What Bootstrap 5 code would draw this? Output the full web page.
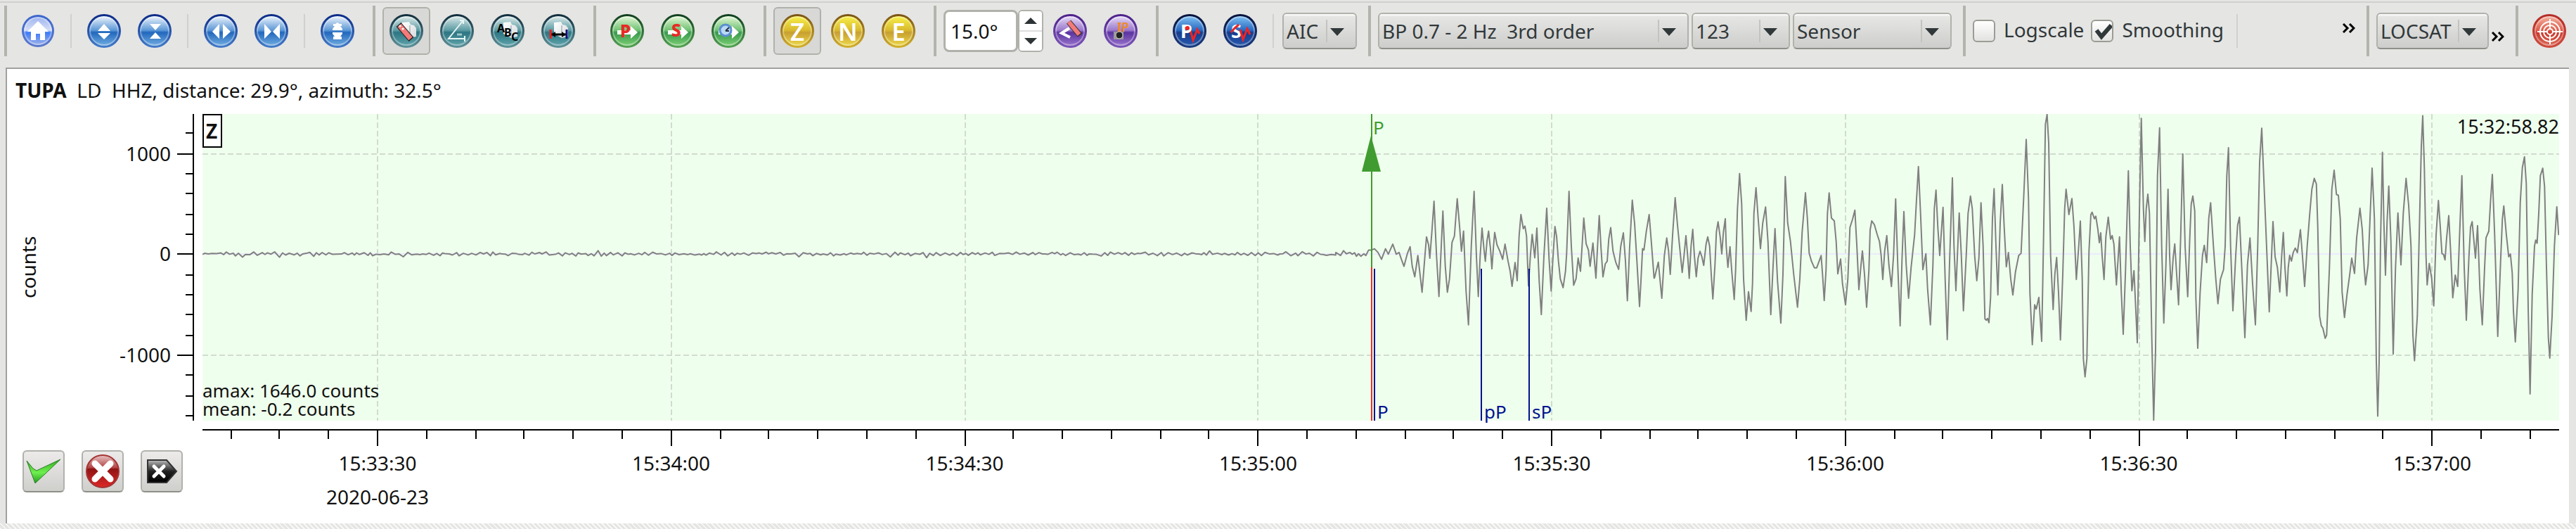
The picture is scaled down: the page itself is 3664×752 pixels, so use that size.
<!DOCTYPE html>
<html lang="en">
<head>
<meta charset="utf-8">
<meta name="viewport" content="width=device-width, initial-scale=1">
<title>Picker - TUPA</title>
<link href="https://cdn.jsdelivr.net/npm/bootstrap@5.3.0/dist/css/bootstrap.min.css" rel="stylesheet">
<script src="https://cdn.jsdelivr.net/npm/bootstrap@5.3.0/dist/js/bootstrap.bundle.min.js"></script>
<style>
:root{--face:#e5e5e3;--handle:#b4b4ae;--edge:#b1b1ac;--ink:#31383a}
body{background:var(--face);font-family:"Noto Sans","Open Sans",sans-serif;font-size:28px;line-height:40px;color:#111}
.toolbar{margin-top:2px;border-top:2px solid #d0d0ce;padding:4px 4px 16px 6px}
.tool-group{gap:4px;height:72px;border-left:4px solid var(--handle);padding:0 16px 0 10px}
.tool-group.last-group{padding-right:0}
.thin-rule{width:2px;height:48px;background:#d0d0ce;margin:0 8px}
.tool-btn{width:68px;height:68px;padding:0;border:2px solid transparent;border-radius:6px;background:none;display:flex;align-items:center;justify-content:center}
.tool-btn.pressed{background:#d8d8d6;border-color:var(--edge)}
.orb{width:48px;height:48px;border-radius:50%;border:3px solid transparent;display:block;overflow:hidden;
 background:linear-gradient(var(--a),var(--b) 48%,var(--c) 55%,var(--d)) padding-box,linear-gradient(var(--r1),var(--r2)) border-box;
 box-shadow:inset 0 0 0 2px rgba(255,255,255,.35)}
.orb svg{display:block;width:48px;height:48px;margin:-3px}
.orb-home{--a:#9db4ee;--b:#d5dff8;--c:#3b7af8;--d:#9fb2e8;--r1:#3d66cc;--r2:#5b79cc;width:46px;height:46px}
.orb-blue{--a:#edf4fc;--b:#5b97d6;--c:#2267bd;--d:#71ace0;--r1:#0b2a86;--r2:#447bca}
.orb-teal{--a:#dceaea;--b:#5a9aa2;--c:#2c7582;--d:#5fa3aa;--r1:#0f2b3b;--r2:#5e939b}
.orb-green{--a:#e3f7d6;--b:#6fc173;--c:#389a4d;--d:#7bcd72;--r1:#0f3d1d;--r2:#55a355}
.orb-gold{--a:#f7f04a;--b:#d9b92e;--c:#c79f31;--d:#ecd748;--r1:#7a5213;--r2:#d3b02b}
.orb-violet{--a:#e6d9f6;--b:#9a78cb;--c:#5b33a0;--d:#9873cc;--r1:#4b2089;--r2:#7c55b8}
.orb-navy{--a:#7fc0f2;--b:#2868c0;--c:#173c8c;--d:#2859ae;--r1:#08123c;--r2:#1c3d82}
.orb-red{--a:#f4b3a2;--b:#dd5a49;--c:#c8392e;--d:#dd6a58;--r1:#b32c26;--r2:#cf4a3e}
.combo,.push-btn{border:2px solid var(--edge);border-bottom-color:#8f8f89;border-radius:6px;color:var(--ink)}
.combo{height:52px;padding:0 44px 0 4px;font-size:28px;line-height:44px;appearance:none;
 background:url("data:image/svg+xml,%3Csvg xmlns='http://www.w3.org/2000/svg' width='44' height='48'%3E%3Cpath d='M2 8h2v32h-2z' fill='%23c3c3c0'/%3E%3Cpath d='M8 20h20l-10 11z' fill='%2331383a'/%3E%3C/svg%3E") right center no-repeat,linear-gradient(#f8f8f7 0 2px,#e6e6e4 3px,#cdcdcb)}
.w-aic{width:106px}.w-filter{width:442px}.w-count{width:140px}.w-unit{width:226px}.w-loc{width:160px}
.spin-text{width:106px;height:60px;border:3px solid var(--edge);border-radius:8px;padding:0 7px;background:#fff;color:#111;line-height:50px}
.spin-arrows{width:36px;height:60px;border:2px solid var(--edge);border-radius:6px;background:#fff;overflow:hidden}
.spin-arrows button{border:0;background:#fff;padding:0;flex:1;display:flex;align-items:center;justify-content:center}
.spin-arrows button+button{border-top:2px solid #ddd}
.tick-box{appearance:none;width:32px;height:32px;border:2px solid #9c9c96;border-radius:6px;background:linear-gradient(#fff,#e2e2e0);margin:0}
.tick-box:checked{background:url("data:image/svg+xml,%3Csvg xmlns='http://www.w3.org/2000/svg' viewBox='0 0 28 28'%3E%3Cpath d='M6 13l7 9L27 6' fill='none' stroke='%2331383a' stroke-width='6'/%3E%3C/svg%3E") center/28px no-repeat,linear-gradient(#fff,#e2e2e0)}
.tick-label{color:var(--ink);margin:0 6px 4px 8px}
.more{border:0;background:none;padding:0;line-height:0}
.panel{margin:0 10px 0 8px;border:solid #a0a09e;border-width:2px 0 0 2px;background:#fff}
.trace-title{padding:10px 12px 14px;white-space:pre}
.gutter{width:278px;flex:none}
.plot-row{margin-right:14px;min-height:200px}
.y-name{writing-mode:vertical-rl;transform:rotate(180deg);margin-left:10px}
.y-labels{flex:1}
.y-labels span{position:absolute;right:9px;transform:translateY(-50%);margin-top:-1px}
.y-scale{width:24px;margin-right:12px}
.plot{background:#efffed}
.small-note{font-size:26px;line-height:26px}
.comp-box{width:28px;height:48px;border:2px solid #000;background:#fff;font-weight:700;line-height:44px;padding-left:3px;font-size:28px}
.start-time{font-size:27px;line-height:36px}
.phase{position:absolute;font-size:26px;line-height:26px;margin-left:4px}
.phase.picked{top:6px;color:#409c30;margin-left:2px}
.phase.theo{bottom:0;color:#00128f}
.x-labels{height:96px;line-height:48px}
.x-labels div{position:absolute;transform:translateX(-50%);text-align:center;white-space:nowrap}
.actions{padding:42px 0 0 22px;gap:24px}
.panel-foot{height:14px}
.push-btn{width:60px;height:60px;padding:0;background:linear-gradient(#ecebea,#cfcfcc);display:flex;align-items:center;justify-content:center}
.hatch{height:8px;background:repeating-linear-gradient(45deg,#f8f8f7 0 2px,var(--face) 2px 5px)}
svg text{font-family:"Noto Sans",sans-serif}
</style>
</head>
<body class="min-vh-100 d-flex flex-column overflow-x-hidden">
<svg width="0" height="0" class="position-absolute" aria-hidden="true">
<defs>
<linearGradient id="gPage" x1="0" y1="0" x2="1" y2="1"><stop offset="0" stop-color="#fff"/><stop offset="1" stop-color="#d5dadc"/></linearGradient>
<linearGradient id="gTag" x1="0" y1="0" x2="0" y2="1"><stop offset="0" stop-color="#bbb"/><stop offset=".5" stop-color="#222"/><stop offset="1" stop-color="#000"/></linearGradient>
<linearGradient id="gStop" x1="0" y1="0" x2="0" y2="1"><stop offset="0" stop-color="#e9c4c4"/><stop offset=".4" stop-color="#b04040"/><stop offset=".42" stop-color="#8e1414"/><stop offset="1" stop-color="#e02626"/></linearGradient>
<linearGradient id="gOk" x1="0" y1="0" x2="0" y2="1"><stop offset="0" stop-color="#2fae1c"/><stop offset=".55" stop-color="#6ff050"/><stop offset="1" stop-color="#1f9a1c"/></linearGradient>
<symbol id="pages" viewBox="0 0 48 48"><path d="M18 12l10-1 2 4 5 1 3 4v12l-9 2-11-6z" fill="url(#gPage)"/><path d="M29 16v13" stroke="#8d999d" stroke-width="1"/></symbol>
</defs>
</svg>

<header class="toolbar d-flex align-items-center">
 <div class="tool-group d-flex align-items-center">
  <button class="tool-btn" aria-label="Home"><span class="orb orb-home"><svg viewBox="0 0 48 48"><path d="M23 9L8 24h5v12h7v-9h6v9h7V24h5z" fill="#fff"/></svg></span></button>
  <span class="thin-rule"></span>
  <button class="tool-btn" aria-label="Increase amplitude"><span class="orb orb-blue"><svg viewBox="0 0 48 48"><path d="M24 14l9 10H15zM15 27h18l-9 9z" fill="#fff"/></svg></span></button>
  <button class="tool-btn" aria-label="Decrease amplitude"><span class="orb orb-blue"><svg viewBox="0 0 48 48"><path d="M17 14h16l-8 9zM25 26l8 9H17z" fill="#fff"/></svg></span></button>
  <span class="thin-rule"></span>
  <button class="tool-btn" aria-label="Stretch time"><span class="orb orb-blue"><svg viewBox="0 0 48 48"><path d="M22 14v21L12 25zM27 14v21l11-10z" fill="#fff"/></svg></span></button>
  <button class="tool-btn" aria-label="Compress time"><span class="orb orb-blue"><svg viewBox="0 0 48 48"><path d="M14 14v21l10-10zM36 14v21L26 25z" fill="#fff"/></svg></span></button>
  <span class="thin-rule"></span>
  <button class="tool-btn" aria-label="Fit amplitude"><span class="orb orb-blue"><svg viewBox="0 0 48 48"><path d="M18 14h3l3-2 3 2h3v3h-2l3 4v2H17v-2l3-4h-2zM17 26h14v2l-3 4h2v4H18v-4h2l-3-4z" fill="#fff"/></svg></span></button>
 </div>
 <div class="tool-group d-flex align-items-center">
  <button class="tool-btn pressed" aria-label="Picking off"><span class="orb orb-teal"><svg viewBox="0 0 48 48"><use href="#pages"/><path d="M13 15l18 21" stroke="#222" stroke-width="9"/><path d="M14 16l16 19" stroke="#f27a78" stroke-width="7"/><path d="M15 17h.1M19 21h.1" stroke="#fff" stroke-width="3" stroke-linecap="round"/></svg></span></button>
  <button class="tool-btn" aria-label="Angle"><span class="orb orb-teal"><svg viewBox="0 0 48 48"><path d="M32 10L12 35h23M28 9h5v5M35 31v8" fill="none" stroke="#e6f4f4" stroke-width="2"/><path d="M24 29h7" stroke="#9fc6ca" stroke-width="3"/></svg></span></button>
  <button class="tool-btn" aria-label="Rename phases"><span class="orb orb-teal"><svg viewBox="0 0 48 48"><use href="#pages"/><g font-weight="700" font-size="16"><text x="9" y="26">A</text><text x="19" y="32">B</text><text x="29" y="38">C</text></g></svg></span></button>
  <button class="tool-btn" aria-label="Uncertainty"><span class="orb orb-teal"><svg viewBox="0 0 48 48"><use href="#pages"/><path d="M12 29h25" stroke="#000" stroke-width="3"/><path d="M20 25l-6 4 6 4zM29 25l6 4-6 4z"/><path d="M13 22v13" stroke="#f02020" stroke-width="3"/><path d="M36 22v13" stroke="#10107a" stroke-width="3"/></svg></span></button>
 </div>
 <div class="tool-group d-flex align-items-center">
  <button class="tool-btn" aria-label="Pick P"><span class="orb orb-green"><svg viewBox="0 0 48 48"><path d="M10 23h19v-6l10 9-10 9v-6H10z" fill="#fff"/><text x="14" y="33" font-size="24" font-weight="800" fill="#e82a24">P</text></svg></span></button>
  <button class="tool-btn" aria-label="Pick S"><span class="orb orb-green"><svg viewBox="0 0 48 48"><path d="M10 23h19v-6l10 9-10 9v-6H10z" fill="#fff"/><text x="15" y="32" font-size="24" font-weight="800" fill="#e82a24">S</text></svg></span></button>
  <button class="tool-btn" aria-label="Pick at time"><span class="orb orb-green"><svg viewBox="0 0 48 48"><path d="M10 23h19v-6l10 9-10 9v-6H10z" fill="#fff"/><circle cx="20" cy="23" r="8" fill="#b9d8f4" stroke="#5b8fd0" stroke-width="3"/><path d="M20 24l5-5M20 24h5" stroke="#234" stroke-width="2"/></svg></span></button>
 </div>
 <div class="tool-group d-flex align-items-center">
  <button class="tool-btn pressed" aria-label="Component Z"><span class="orb orb-gold"><svg viewBox="0 0 48 48"><text x="24" y="38" text-anchor="middle" font-size="35" font-weight="600" fill="#fff">Z</text></svg></span></button>
  <button class="tool-btn" aria-label="Component N"><span class="orb orb-gold"><svg viewBox="0 0 48 48"><text x="24" y="38" text-anchor="middle" font-size="35" font-weight="600" fill="#fff">N</text></svg></span></button>
  <button class="tool-btn" aria-label="Component E"><span class="orb orb-gold"><svg viewBox="0 0 48 48"><text x="24" y="38" text-anchor="middle" font-size="35" font-weight="600" fill="#fff">E</text></svg></span></button>
 </div>
 <div class="tool-group d-flex align-items-center">
  <div class="d-flex">
   <input class="spin-text" type="text" value="15.0°" aria-label="Maximum distance">
   <div class="spin-arrows d-flex flex-column">
    <button aria-label="Up"><svg width="18" height="9"><path d="M0 9h18L9 0z" fill="#2e3436"/></svg></button>
    <button aria-label="Down"><svg width="18" height="9"><path d="M0 0h18L9 9z" fill="#2e3436"/></svg></button>
   </div>
  </div>
  <button class="tool-btn" aria-label="Sort by distance"><span class="orb orb-violet"><svg viewBox="0 0 48 48"><path d="M23 20l-11 7 12 6" fill="none" stroke="#fff" stroke-width="4"/><path d="M22 11l16 19" stroke="#333" stroke-width="8"/><path d="M22 11l15 18" stroke="#f27a78" stroke-width="6"/></svg></span></button>
  <button class="tool-btn" aria-label="Show all"><span class="orb orb-violet"><svg viewBox="0 0 48 48"><text x="19" y="25" font-size="17" font-weight="600" fill="#f08a28">IP</text><path d="M22 13v14" stroke="#f08a28" stroke-width="3"/><path d="M14 25h14v11H14z" fill="#999"/><circle cx="22" cy="30" r="5" fill="#222" stroke="#ccc"/></svg></span></button>
 </div>
 <div class="tool-group d-flex align-items-center">
  <button class="tool-btn" aria-label="Align on P"><span class="orb orb-navy"><svg viewBox="0 0 48 48"><path d="M16 19h8l5 18 6-15 3 6" fill="none" stroke="#ee2424" stroke-width="3"/><text x="11" y="34" font-size="27" font-weight="700" fill="#fff">P</text><circle cx="21" cy="20" r="3" fill="#ee2424"/></svg></span></button>
  <button class="tool-btn" aria-label="Align on S"><span class="orb orb-navy"><svg viewBox="0 0 48 48"><text x="11" y="34" font-size="27" font-weight="700" fill="#fff">S</text><path d="M11 26l5-6 6-5M24 22l4 14 6-15 4 8" fill="none" stroke="#ee2424" stroke-width="3"/></svg></span></button>
  <span class="thin-rule"></span>
  <select class="combo w-aic" aria-label="Repicker"><option>AIC</option></select>
 </div>
 <div class="tool-group d-flex align-items-center">
  <select class="combo w-filter" aria-label="Filter"><option>BP 0.7 - 2 Hz &nbsp;3rd order</option></select>
  <select class="combo w-count" aria-label="Rotation"><option>123</option></select>
  <select class="combo w-unit" aria-label="Unit"><option>Sensor</option></select>
 </div>
 <div class="tool-group d-flex align-items-center flex-grow-1">
  <input class="tick-box" type="checkbox" id="logscale"><label class="tick-label" for="logscale">Logscale</label>
  <input class="tick-box" type="checkbox" id="smoothing" checked><label class="tick-label" for="smoothing">Smoothing</label>
  <span class="thin-rule"></span>
  <button class="more ms-auto mb-2" aria-label="More tools"><svg width="18" height="14" fill="none" stroke="#000" stroke-width="3"><path d="M1 1l6 6-6 6M10 1l6 6-6 6"/></svg></button>
 </div>
 <div class="tool-group d-flex align-items-center">
  <select class="combo w-loc" aria-label="Locator"><option>LOCSAT</option></select>
  <button class="more mt-3" aria-label="More locator tools"><svg width="18" height="14" fill="none" stroke="#000" stroke-width="3"><path d="M1 1l6 6-6 6M10 1l6 6-6 6"/></svg></button>
 </div>
 <div class="tool-group last-group d-flex align-items-center">
  <button class="tool-btn" aria-label="Relocate"><span class="orb orb-red"><svg viewBox="0 0 48 48" fill="none" stroke="#fff" stroke-width="2"><circle cx="25" cy="25" r="14"/><circle cx="25" cy="25" r="9"/><circle cx="25" cy="25" r="4"/><path d="M25 7v14M25 29v14M7 25h14M29 25h14"/></svg></span></button>
 </div>
</header>

<main class="panel flex-grow-1 d-flex flex-column">
 <div class="trace-title"><b>TUPA</b>  LD  HHZ, distance: 29.9°, azimuth: 32.5°</div>
 <div class="plot-row flex-grow-1 d-flex">
  <div class="gutter d-flex">
   <div class="y-name text-center">counts</div>
   <div class="y-labels position-relative" id="yLabels"></div>
   <svg class="y-scale h-100" id="yScale" viewBox="0 0 24 436" preserveAspectRatio="none" shape-rendering="crispEdges"></svg>
  </div>
  <div class="plot position-relative flex-grow-1">
   <svg class="position-absolute w-100 h-100" viewBox="0 0 3352 436" preserveAspectRatio="none">
    <g id="grid" stroke="#cfdccf" stroke-width="2" stroke-dasharray="8 4" shape-rendering="crispEdges"></g>
    <path d="M0 199H3352" stroke="#eaeaff" stroke-width="2"/>
    <path id="trace" fill="none" stroke="#808080" stroke-width="2" stroke-linejoin="round"/>
    <g id="phaseLines" stroke-width="2" shape-rendering="crispEdges"></g>
    <path d="M1662 31l14 51h-27z" fill="#409c30"/>
   </svg>
   <div class="comp-box position-absolute top-0 start-0">Z</div>
   <div class="start-time position-absolute top-0 end-0">15:32:58.82</div>
   <div class="small-note position-absolute start-0 bottom-0 pb-1">amax: 1646.0 counts<br>mean: -0.2 counts</div>
   <div id="phases"></div>
  </div>
 </div>
 <div class="d-flex">
  <div class="gutter d-flex actions">
   <button class="push-btn" aria-label="Confirm pick"><svg width="52" height="40" viewBox="0 0 52 40"><path d="M2 5l9 11 5 3L50 3 14 37z" fill="url(#gOk)" stroke="#2f7d28"/></svg></button>
   <button class="push-btn" aria-label="Disable trace"><svg width="50" height="50" viewBox="0 0 50 50"><circle cx="25" cy="25" r="23" fill="url(#gStop)" stroke="#a43434" stroke-width="2"/><path d="M14 14l22 22M36 14L14 36" stroke="#fff" stroke-width="9" stroke-linecap="round"/></svg></button>
   <button class="push-btn" aria-label="Discard pick"><svg width="46" height="36" viewBox="0 0 46 36"><path d="M3 2h27l14 16-14 16H3z" fill="url(#gTag)" stroke="#333" stroke-width="2"/><path d="M12 11l14 14M26 11L12 25" stroke="#fff" stroke-width="5" stroke-linecap="round"/></svg></button>
  </div>
  <div class="plot-row flex-grow-1">
   <svg class="d-block w-100" height="36" id="xScale" viewBox="0 0 3352 36" preserveAspectRatio="none" shape-rendering="crispEdges"></svg>
   <div class="x-labels position-relative" id="xLabels"></div>
  </div>
 </div>
 <div class="panel-foot"></div>
</main>
<div class="hatch"></div>
<style>.plot-row .x-labels{margin:0}.panel>.d-flex>.plot-row{min-height:0}</style>

<script>
const W = 3352, H = 436, ZERO = 199;
const el = id => document.getElementById(id);
const line = (x1, y1, x2, y2, extra = '') => `<path d="M${x1} ${y1}L${x2} ${y2}" ${extra}/>`;

// Amplitude scale: one tick per 200 counts, labels every 1000.
const yTicks = [27,57,85,113,143,171,199,229,257,285,315,343,371,401,429];
const yMajor = {57:'1000', 199:'0', 343:'-1000'};
el('yScale').innerHTML = `<g stroke="#000" stroke-width="2">${line(23,0,23,H)}${yTicks.map(y => line(yMajor[y] ? 0 : 12, y, 24, y)).join('')}</g>`;
el('yLabels').innerHTML = Object.entries(yMajor).map(([y,t]) => `<span style="top:${y/H*100}%">${t}</span>`).join('');

// Time scale: five seconds per tick, labels every thirty.
const first = 249, step = 417.5, even = v => Math.round((v - 1) / 2) * 2 + 1;
const names = ['15:33:30','15:34:00','15:34:30','15:35:00','15:35:30','15:36:00','15:36:30','15:37:00'];
let ticks = line(0, 13, W, 13);
for (let i = -3; i <= 44; i++) ticks += line(even(first + i*step/6), 12, even(first + i*step/6), i % 6 ? 26 : 36);
el('xScale').innerHTML = `<g stroke="#000" stroke-width="2">${ticks}</g>`;
el('xLabels').innerHTML = names.map((t,i) => `<div style="left:${(first + i*step)/W*100}%">${t}${i ? '' : '<br>2020-06-23'}</div>`).join('');
el('grid').innerHTML = line(0,57,W,57) + line(0,343,W,343) + names.map((t,i) => line(even(first+i*step),0,even(first+i*step),H)).join('');

// Phase markers.
const phases = [{x:1663,t:'P',picked:true},{x:1667,t:'P'},{x:1819,t:'pP'},{x:1887,t:'sP'}];
el('phaseLines').innerHTML = line(1663,0,1663,218,'stroke="#409c30"') + line(1663,218,1663,H,'stroke="#f22c2c"') + phases.slice(1).map(p => line(p.x,220,p.x,H,'stroke="#00128f"')).join('');
el('phases').innerHTML = phases.map(p => `<span class="phase ${p.picked ? 'picked' : 'theo'}" style="left:${p.x/W*100}%">${p.t}</span>`).join('');

// Waveform: background noise, then recorded blocks, each with its own origin and resolution.
let seed = 11;
const rnd = () => (seed = (seed * 16807) % 2147483647) / 2147483647;
const pts = [];
for (let x = 0, s = 1; x < 1612; x += 3 + rnd()*4, s = -s) {
  const big = rnd() > .94 ? 2.4 : 1;
  pts.push([x, ZERO + s * rnd() * 2.4 * big + (rnd() - .5) * 2]);
}
const blocks = [
[1612,2.8,`0 585,20 597,33 578,45 590,60 585,70 592,80 586,88 600,97 590,107 600,120 590,128 597,140 575,153 575,165 570,180 585,195 612,212 570,224 592,243 552,258 592,270 585,280 612,291 640,305 590,317 562,326 640,337 682,350 597,368 743,380 600,387 523,396 555,401 608,410 500,419 381,430 600,440 760,450 560,457 420,467 640,476 743,485 690,496 545,506 520,518 371,528 480,536 580,545 500,556 740,566 873,578 560,590 342,600 600,608 760,616 600,624 488,632 570,638 620,645 540,652 500,660 570,666 650,673 560,678 505,688 555,700 580,712 612,722 552,735 620,744 660,752 720,765 625,774 697,782 520,790 434,800 490,807 480,814 520,822 718,830 600,838 513,849 606,858 488,868 700,877 832,888 600,900 409,910 610,919 738,927 600,935 482,942 520,950 620,958 690,970 725,980 660,985 590,995 342,1005 560,1015 715,1025 690,1034 607,1044 660,1051 560,1058 448,1068 550,1078 575,1085 640,1097 547,1110 687,1117 560,1124 438,1132 570,1140 682,1150 630,1158 620,1165 530,1173 486,1183 580,1195 625,1207 652,1216 560,1227 507,1236 620,1244 777,1254 560,1265 377,1275 470,1285 620,1296 800,1302 700,1309 570,1315 575,1325 500,1337 434,1346 540,1358 687`],
[2052,3,`40 735,56 668,71 822,82 640,92 565,100 620,107 720,118 540,128 393,138 510,148 610,158 712,166 640,174 555,182 650,188 737,196 600,203 528,210 640,218 730,226 650,234 622,242 645,250 682,260 590,267 560,275 600,282 720,289 825,298 680,304 540,311 496,320 560,327 633,334 540,342 483,346 600,353 690,362 602,370 710,380 827,386 700,394 440,403 290,412 420,420 740,431 916,441 794,452 878,458 760,464 460,473 350,482 480,492 610,502 500,514 433,524 580,536 892,545 700,554 525,565 750,579 928,588 720,598 303,608 500,620 580,634 720,650 860,660 740,670 540,684 372,692 480,700 630,710 665,722 692,732 692,740 670,751 640,757 720,764 832,772 700,778 460,785 373,795 480,807 492,815 580,822 718,834 655,842 760,855 850,865 740,874 520,885 485,895 446,904 610,912 785,920 690,927 620,936 720,945 860,955 700,960 530,967 492,978 508,990 550,1000 580,1007 640,1014 742,1022 620,1031 555,1040 680,1051 772,1060 640,1069 398,1078 680,1088 940,1096 660,1104 452,1114 680,1124 822,1135 690,1150 550,1158 400,1166 260,1175 460,1185 700,1198 632,1205 780,1217 935,1228 680,1234 440,1241 361,1249 520,1257 640,1271 434,1280 740,1289 998,1300 640,1311 308,1318 600,1326 790`],
[2492,3,`20 458,29 640,38 875,50 640,58 460,68 386,76 440,86 640,95 747,104 650,113 415,122 600,130 910,136 916,141 908,147 926,154 820,162 480,169 355,177 600,185 808,195 500,204 337,212 520,221 688,230 627,240 740,249 808,260 710,274 640,284 630,295 400,306 145,316 400,322 800,332 1020,342 850,349 868,360 818,372 1006,380 560,388 80,395 38,402 160,410 640,421 870,428 720,436 648,444 800,452 1000,462 720,470 440,476 357,488 465,501 397,510 520,520 742,530 600,537 493,545 740,550 1080,557 1157,565 1080,574 620,582 465,587 455,597 483,603 472,612 530,618 585,624 543,630 640,638 742,646 560,656 476,666 570,673 555,680 590,691 765,704 560,712 800,720 976,730 700,742 278,750 600,757 790,766 704,773 860,780 1012,788 500,797 55,806 440,812 580,818 440,825 378,832 460,842 1000,850 1342,858 1040,866 300,875 95,884 600,893 928,902 680,911 357,918 640,924 785,933 650,940 590,948 720,956 850,965 560,974 206,984 600,995 815,1004 560,1010 420,1017 386,1025 450,1030 820,1038 1035,1048 800,1058 640,1066 596,1076 670,1085 480,1093 415,1105 600,1115 740,1124 845,1135 740,1148 700,1155 600,1162 300,1169 180,1178 600,1188 875,1200 640,1208 510,1216 476,1226 700,1239 990,1250 680,1261 565,1272 760,1284 935,1294 600,1302 240,1311 97,1325 440,1343 880`],
[2932,2.605,`39 430,48 560,58 600,68 690,76 560,83 470,90 600,98 705,104 600,110 555,118 576,125 545,134 528,143 545,150 500,156 460,165 560,174 670,185 520,196 400,205 310,215 270,224 290,230 450,238 780,245 815,252 825,262 862,268 850,280 600,290 310,300 240,310 330,318 332,326 420,334 690,344 785,355 700,365 635,375 565,387 622,396 490,410 380,420 460,428 600,434 664,445 590,453 420,462 232,472 420,480 950,486 1150,492 950,498 500,506 173,512 430,519 628,526 430,533 298,542 500,552 920,562 600,572 398,585 590,595 400,607 270,618 370,628 520,636 850,643 945,655 780,665 400,672 150,678 38,685 230,692 560,697 664,706 585,716 640,725 742,735 480,745 352,752 440,760 548,767 552,773 572,780 490,789 408,797 540,806 712,817 628,827 670,836 460,845 260,855 600,864 795,875 560,882 450,889 430,903 565,912 445,922 680,932 812,942 600,948 490,960 465,967 360,975 255,985 480,998 855,1010 580,1018 420,1024 372,1035 480,1045 560,1052 550,1060 620,1065 760,1073 875,1085 680,1094 360,1103 230,1112 190,1120 290,1128 750,1136 1068,1145 700,1155 520,1160 498,1166 510,1173 400,1180 260,1190 232,1198 300,1206 600,1214 860,1220 935,1230 780,1240 520,1250 375,1258 480`]];
for (const [x0, res, data] of blocks)
  for (const p of data.split(',')) { const [x, y] = p.split(' ').map(Number); pts.push([x0 + x/3, y/res - 12]); }
el('trace').setAttribute('d', 'M' + pts.map(p => p[0].toFixed(1) + ' ' + p[1].toFixed(1)).join('L'));
</script>
</body>
</html>
